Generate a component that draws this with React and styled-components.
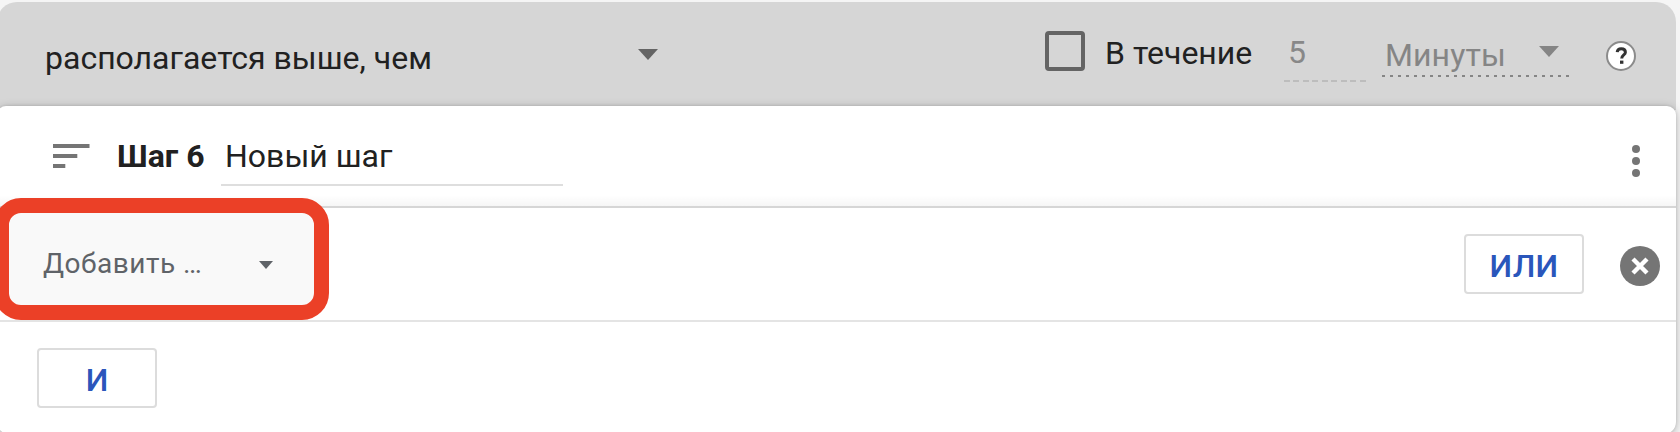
import React from "react";
import styled, { createGlobalStyle } from "styled-components";

const GlobalStyle = createGlobalStyle`
  *, *::before, *::after { box-sizing: border-box; }
  html, body { margin: 0; height: 100%; overflow: hidden; }
  body { background: #f5f5f5; font-family: Roboto, "Liberation Sans", sans-serif; }
`;

const Page = styled.main`
  width: 1690px;
  height: 432px;
  margin-left: -3px;
  padding: 2px 11px 0 0;
  overflow: hidden;
`;

const SequenceBar = styled.section`
  display: flex;
  align-items: flex-start;
  height: 108px;
  padding-left: 48px;
  background: #d6d6d6;
  border-radius: 20px 20px 0 0;
`;

const Label = styled.span`
  flex: none;
  width: ${(p) => p.$width}px;
  margin-top: ${(p) => p.$top || 0}px;
  font-size: ${(p) => p.$size || 32}px;
  font-weight: ${(p) => p.$weight || 400};
  letter-spacing: ${(p) => p.$spacing || 0}px;
  line-height: 40px;
  white-space: nowrap;
  color: ${(p) => p.$color || "#212121"};
`;

const Arrow = styled.span`
  flex: none;
  width: 0;
  height: 0;
  margin-top: ${(p) => p.$top || 0}px;
  border-style: solid;
  border-color: ${(p) => p.$color} transparent transparent;
  border-width: ${(p) => p.$h}px ${(p) => p.$half}px 0;
`;

const Checkbox = styled.span`
  flex: none;
  width: 40px;
  height: 40px;
  margin: 29px 20px 0 387px;
  border: 4px solid #646464;
  border-radius: 4px;
`;

const AmountField = styled.span`
  flex: none;
  display: flex;
  width: 82px;
  height: 80px;
  margin-left: 34px;
  padding-left: 4px;
  background: repeating-linear-gradient(90deg, #bdbdbd 0 6px, transparent 6px 9.5px) bottom / 100% 2px no-repeat;
`;

const UnitSelect = styled.span`
  flex: none;
  display: flex;
  width: 187px;
  height: 75px;
  margin-left: 16px;
  padding-left: 3px;
  background: repeating-linear-gradient(90deg, #858585 0 3px, transparent 3px 8px) bottom / 100% 2px no-repeat;
`;

const HelpIcon = styled.svg`
  flex: none;
  margin: 38px 0 0 36px;
`;

const StepCard = styled.section`
  position: relative;
  height: 328px;
  margin-top: -4px;
  background: #fff;
  border-radius: 9px 9px 12px 12px;
  box-shadow: 0 2px 10px rgba(0, 0, 0, 0.26), 0 0 3px rgba(0, 0, 0, 0.12);
`;

const StepHeader = styled.header`
  display: flex;
  align-items: flex-start;
  height: 102px;
  padding-left: 56px;
  border-bottom: 2px solid #d6d6d6;
  background: linear-gradient(rgba(0, 0, 0, 0), rgba(0, 0, 0, 0.035)) bottom / 100% 11px no-repeat;
  border-radius: 9px 9px 0 0;
`;

const SortIcon = styled.svg`
  flex: none;
  margin: 38px 27px 0 0;
`;

const NameField = styled.span`
  width: 342px;
  height: 80px;
  margin-left: 15px;
  padding: 30px 0 0 4px;
  border-bottom: 2px solid #dedede;
`;

const MenuIcon = styled.svg`
  flex: none;
  margin: 39px 36px 0 auto;
`;

const ConditionRow = styled.div`
  display: flex;
  align-items: center;
  height: 114px;
  padding-right: 16px;
  border-bottom: 2px solid #e4e4e4;
`;

const Highlight = styled.div`
  position: relative;
  flex: none;
  width: 335px;
  height: 122px;
  margin: -11px 0 0 -2.6px;
  display: flex;
  align-items: center;
  padding-left: 33.6px;
  border: 15px solid #eb4027;
  border-radius: 27px;
  background: #f9f9f9;
`;

const OutlineButton = styled.button`
  flex: none;
  width: 120px;
  height: 60px;
  margin: 0 0 0 ${(p) => p.$left || "0"};
  padding: 3px 0 0;
  border: 2px solid #dcdcdc;
  border-radius: 4px;
  background: #fff;
  color: #2a56bb;
  font: 500 32px/40px Roboto, "Liberation Sans", sans-serif;
  letter-spacing: ${(p) => p.$spacing || 0}px;
`;

const RemoveIcon = styled.svg`
  flex: none;
  margin: 3px 0 0 36px;
`;

const AddRow = styled.div`
  padding: 26px 0 0 40px;
`;

export default function App() {
  return (
    <>
      <GlobalStyle />
      <Page>
        <SequenceBar>
          <Label $width={593} $top={36}>располагается выше, чем</Label>
          <Arrow $top={47} $color="#646464" $h={11} $half={10.5} />
          <Checkbox />
          <Label $width={145} $top={31}>В течение</Label>
          <AmountField>
            <Label $width={40} $top={30} $color="#888">5</Label>
          </AmountField>
          <UnitSelect>
            <Label $width={154} $top={33} $spacing={0.1} $color="#858585">Минуты</Label>
            <Arrow $top={44} $color="#858585" $h={11} $half={10.5} />
          </UnitSelect>
          <HelpIcon width="32" height="32" viewBox="0 0 32 32">
            <circle cx="16" cy="16" r="14" fill="#fff" stroke="#8b8b8b" strokeWidth="2" />
            <path d="M12.2 12.2C12.4 9.9 14 8.8 16.2 8.8C18.6 8.8 20.4 10 20.4 12.2C20.4 15 16.7 14.9 16.7 18.6" fill="none" stroke="#333" strokeWidth="3" />
            <rect x="15" y="20.6" width="3.4" height="3.2" fill="#333" />
          </HelpIcon>
        </SequenceBar>
        <StepCard>
          <StepHeader>
            <SortIcon width="37" height="24" fill="#757575">
              <rect width="36.5" height="4" />
              <rect y="10" width="24.3" height="4" />
              <rect y="20" width="12.3" height="4" />
            </SortIcon>
            <Label $width={89} $top={30} $weight={700}>Шаг 6</Label>
            <NameField>
              <Label>Новый шаг</Label>
            </NameField>
            <MenuIcon width="8" height="32" fill="#757575">
              <circle cx="4" cy="4" r="4" />
              <circle cx="4" cy="16" r="4" />
              <circle cx="4" cy="28" r="4" />
            </MenuIcon>
          </StepHeader>
          <ConditionRow>
            <Highlight>
              <Label $width={216} $top={10} $size={28} $spacing={0.5} $color="#5f6368">Добавить …</Label>
              <Arrow $top={12} $color="#5f6368" $h={8} $half={7.5} />
            </Highlight>
            <OutlineButton $left="auto" $spacing={0.3}>ИЛИ</OutlineButton>
            <RemoveIcon width="40" height="40">
              <circle cx="20" cy="20" r="20" fill="#757575" />
              <path d="M13 13L27 27M27 13L13 27" stroke="#fff" strokeWidth="4.4" />
            </RemoveIcon>
          </ConditionRow>
          <AddRow>
            <OutlineButton>И</OutlineButton>
          </AddRow>
        </StepCard>
      </Page>
    </>
  );
}
